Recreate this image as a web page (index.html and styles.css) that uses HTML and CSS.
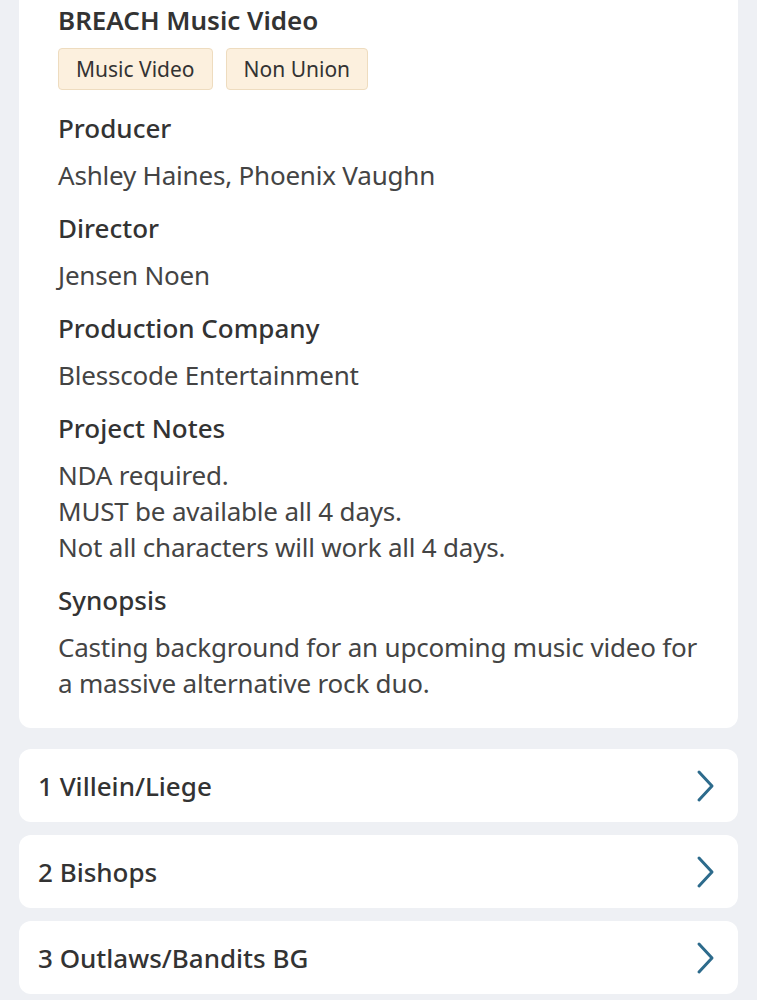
FILE: index.html
```html
<!DOCTYPE html>
<html lang="en">
<head>
    <meta charset="UTF-8">
    <meta name="viewport" content="width=device-width, initial-scale=1.0">
    <title>BREACH Music Video</title>
    <link rel="stylesheet" href="styles.css">
</head>
<body>
    <div class="page">
        <div class="details">
            <h1 class="title">BREACH Music Video</h1>
            <div class="tags">
                <span class="tag">Music Video</span>
                <span class="tag">Non Union</span>
            </div>

            <div class="field">
                <div class="label">Producer</div>
                <div class="value">Ashley Haines, Phoenix Vaughn</div>
            </div>
            <div class="field">
                <div class="label">Director</div>
                <div class="value">Jensen Noen</div>
            </div>
            <div class="field">
                <div class="label">Production Company</div>
                <div class="value">Blesscode Entertainment</div>
            </div>
            <div class="field">
                <div class="label">Project Notes</div>
                <div class="value">NDA required.<br>MUST be available all 4 days.<br>Not all characters will work all 4 days.</div>
            </div>
            <div class="field">
                <div class="label">Synopsis</div>
                <div class="value">Casting background for an upcoming music video for a massive alternative rock duo.</div>
            </div>
        </div>

        <div class="roles">
            <a class="role" href="#">
                <span>1 Villein/Liege</span>
                <svg class="chevron" viewBox="0 0 20 34"><path d="M3 3 L16 17 L3 31"/></svg>
            </a>
            <a class="role" href="#">
                <span>2 Bishops</span>
                <svg class="chevron" viewBox="0 0 20 34"><path d="M3 3 L16 17 L3 31"/></svg>
            </a>
            <a class="role" href="#">
                <span>3 Outlaws/Bandits BG</span>
                <svg class="chevron" viewBox="0 0 20 34"><path d="M3 3 L16 17 L3 31"/></svg>
            </a>
        </div>
    </div>
</body>
</html>
```

FILE: styles.css
```css
body {
    margin: 0;
    padding: 0;
    background-color: #eef0f4;
    font-family: "Noto Sans", "Open Sans", sans-serif;
    color: #333;
}

.page {
    padding: 0 19px;
}

.details {
    background-color: white;
    border-radius: 0 0 12px 12px;
    padding: 2px 24px 27px 39px;
}

.title {
    margin: 0;
    font-size: 26px;
    line-height: 36px;
    font-weight: 600;
    color: #333;
}

.tags {
    display: flex;
    gap: 13px;
    margin-top: 10px;
    margin-bottom: 20px;
}

.tag {
    display: inline-block;
    height: 40px;
    line-height: 40px;
    padding: 0 17px;
    background-color: #fcf0de;
    border: 1px solid #eedcbf;
    border-radius: 4px;
    font-size: 21px;
    color: #333;
}

.field {
    margin-bottom: 17px;
}

.field:last-child {
    margin-bottom: 0;
}

.label {
    font-size: 26px;
    line-height: 36px;
    font-weight: 500;
    color: #333;
    margin-bottom: 11px;
}

.value {
    font-size: 26px;
    line-height: 36px;
    letter-spacing: -0.2px;
    color: #444;
}

.roles {
    display: flex;
    flex-direction: column;
    gap: 13px;
    margin-top: 21px;
}

.role {
    display: flex;
    align-items: center;
    justify-content: space-between;
    height: 73px;
    padding: 0 22px 0 19px;
    background-color: white;
    border-radius: 12px;
    text-decoration: none;
    font-size: 26px;
    font-weight: 500;
    color: #333;
}

.chevron {
    width: 20px;
    height: 34px;
    fill: none;
    stroke: #2d6b8c;
    stroke-width: 3;
    stroke-linecap: round;
    stroke-linejoin: round;
}
```
